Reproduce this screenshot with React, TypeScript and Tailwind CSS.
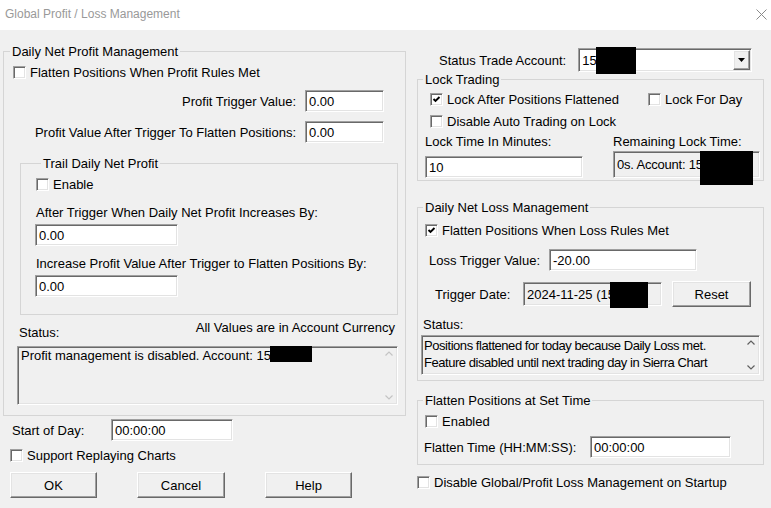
import React from 'react';

// classic 3D borders
const sunken =
  'border border-t-[#a0a0a0] border-l-[#a0a0a0] border-r-white border-b-white shadow-[inset_1px_1px_0_#696969,inset_-1px_-1px_0_#e3e3e3]';
const raised =
  'border border-t-white border-l-white border-r-[#696969] border-b-[#696969] shadow-[inset_-1px_-1px_0_#a0a0a0,inset_1px_1px_0_#e3e3e3]';

const Check = ({ checked = false }: { checked?: boolean }) => (
  <span className={`relative inline-block w-[13px] h-[13px] shrink-0 bg-white ${sunken}`}>
    {checked && (
      <svg className="absolute left-[1px] top-[1px]" width="9" height="9" viewBox="0 0 9 9">
        <path d="M1.5 4 L3.5 6 L7.5 2" fill="none" stroke="#000" strokeWidth="1.9" />
      </svg>
    )}
  </span>
);

const CheckRow = ({
  label,
  checked,
  className = '',
}: {
  label: string;
  checked?: boolean;
  className?: string;
}) => (
  <div className={`flex items-center h-[15px] gap-[4px] ${className}`}>
    <Check checked={checked} />
    <span className="whitespace-nowrap">{label}</span>
  </div>
);

const Edit = ({
  value,
  className = '',
  readOnly = false,
  children,
}: {
  value?: string;
  className?: string;
  readOnly?: boolean;
  children?: React.ReactNode;
}) => (
  <div
    className={`relative flex items-center pl-[3px] shrink-0 whitespace-nowrap ${readOnly ? 'bg-[#f0f0f0]' : 'bg-white'} ${sunken} ${className}`}
  >
    {value}
    {children}
  </div>
);

const Btn = ({ label, className = '' }: { label: string; className?: string }) => (
  <button className={`h-[26px] bg-[#f0f0f0] flex items-center justify-center ${raised} ${className}`}>
    {label}
  </button>
);

const Group = ({
  title,
  className = '',
  legendClass = 'ml-[6px]',
  children,
}: {
  title: string;
  className?: string;
  legendClass?: string;
  children: React.ReactNode;
}) => (
  <fieldset className={`border border-[#d5d5d5] min-w-0 ${className}`}>
    <legend className={`px-[2px] leading-[15px] ${legendClass}`}>{title}</legend>
    {children}
  </fieldset>
);

const Scroll = ({ dim }: { dim?: boolean }) => (
  <div className="w-[17px] flex flex-col justify-between items-center py-[4px] self-stretch">
    <svg width="8" height="5" viewBox="0 0 8 5">
      <path d="M0.5 4.5 L4 1 L7.5 4.5" fill="none" stroke={dim ? '#c4c4c4' : '#606060'} strokeWidth="1.2" />
    </svg>
    <svg width="8" height="5" viewBox="0 0 8 5">
      <path d="M0.5 0.5 L4 4 L7.5 0.5" fill="none" stroke={dim ? '#c4c4c4' : '#606060'} strokeWidth="1.2" />
    </svg>
  </div>
);

const Redact = ({ className }: { className: string }) => (
  <span className={`absolute bg-black ${className}`} />
);

export default function App() {
  return (
    <div className="w-[771px] h-[508px] overflow-hidden bg-[#f0f0f0] text-black text-[13px] leading-[15px] font-['Liberation_Sans',Arial,sans-serif]">
      {/* title bar */}
      <div className="h-[30px] bg-white flex items-center justify-between pl-[5px] pr-[4px] pb-[2px]">
        <span className="text-[12px] text-[#999999]">Global Profit / Loss Management</span>
        <svg width="11" height="11" viewBox="0 0 11 11">
          <path d="M0.5 0.5 L10.5 10.5 M10.5 0.5 L0.5 10.5" stroke="#8a8a8a" strokeWidth="1" />
        </svg>
      </div>

      <div className="flex pl-[3px]">
        {/* left column */}
        <div className="w-[403px] flex flex-col">
          <Group title="Daily Net Profit Management" className="mt-[14px] pb-[10px]">
            <CheckRow label="Flatten Positions When Profit Rules Met" className="mt-[6px] pl-[9px]" />
            <div className="flex items-center justify-end pr-[21px] mt-[10px]">
              <span>Profit Trigger Value:</span>
              <Edit value="0.00" className="ml-[9px] w-[79px] h-[22px]" />
            </div>
            <div className="flex items-center justify-end pr-[21px] mt-[9px]">
              <span>Profit Value After Trigger To Flatten Positions:</span>
              <Edit value="0.00" className="ml-[9px] w-[79px] h-[22px]" />
            </div>

            <Group title="Trail Daily Net Profit" className="mt-[13px] ml-[16px] mr-[7px] pb-[17px] pl-[14px]">
              <CheckRow label="Enable" className="mt-[6px] pl-[1px]" />
              <div className="mt-[13px] pl-[1px]">After Trigger When Daily Net Profit Increases By:</div>
              <Edit value="0.00" className="mt-[4px] w-[143px] h-[22px]" />
              <div className="mt-[10px] pl-[1px]">Increase Profit Value After Trigger to Flatten Positions By:</div>
              <Edit value="0.00" className="mt-[4px] w-[143px] h-[22px]" />
            </Group>

            <div className="flex justify-between h-[20px] mt-[5px] pl-[15px] pr-[10px]">
              <span className="self-end">Status:</span>
              <span className="self-start">All Values are in Account Currency</span>
            </div>
            <div className={`relative flex mt-[6px] ml-[13px] mr-[7px] h-[59px] bg-[#f0f0f0] ${sunken}`}>
              <div className="flex-1 pl-[3px] pt-[1px]">Profit management is disabled. Account: 15</div>
              <Scroll dim />
              <Redact className="left-[252px] -top-[1px] w-[42px] h-[16px]" />
            </div>
          </Group>

          <div className="flex items-center mt-[3px] pl-[9px]">
            <span className="w-[99px]">Start of Day:</span>
            <Edit value="00:00:00" className="w-[122px] h-[22px]" />
          </div>
          <CheckRow label="Support Replaying Charts" className="mt-[7px] pl-[7px]" />
          <div className="flex gap-[40px] mt-[9px] pl-[7px]">
            <Btn label="OK" className="w-[87px]" />
            <Btn label="Cancel" className="w-[88px]" />
            <Btn label="Help" className="w-[87px]" />
          </div>
        </div>

        {/* right column */}
        <div className="w-[347px] ml-[11px] flex flex-col">
          <div className="flex items-center mt-[18px] pl-[22px]">
            <span>Status Trade Account:</span>
            <div className={`relative ml-[12px] w-[174px] h-[24px] bg-white flex items-center justify-between ${sunken}`}>
              <span className="pl-[3px]">15</span>
              <div className={`mr-[1px] w-[17px] h-[20px] bg-[#f0f0f0] flex items-center justify-center ${raised}`}>
                <svg width="7" height="4" viewBox="0 0 7 4">
                  <path d="M0 0 H7 L3.5 4 Z" fill="#000" />
                </svg>
              </div>
              <Redact className="left-[17px] -top-[2px] w-[40px] h-[27px]" />
            </div>
          </div>

          <Group title="Lock Trading" className="pb-[2px]" legendClass="ml-[5px]">
            <div className="flex items-center mt-[5px] pl-[12px]">
              <CheckRow label="Lock After Positions Flattened" checked className="w-[218px]" />
              <CheckRow label="Lock For Day" />
            </div>
            <CheckRow label="Disable Auto Trading on Lock" className="mt-[7px] pl-[12px]" />
            <div className="flex mt-[5px] pl-[7px]">
              <span className="w-[188px]">Lock Time In Minutes:</span>
              <span>Remaining Lock Time:</span>
            </div>
            <div className="flex items-end mt-[2px] pl-[7px]">
              <Edit value="10" className="w-[158px] h-[22px]" />
              <Edit readOnly className="ml-[30px] w-[147px] h-[27px]">
                <span className="pb-[1px] tracking-[-0.2px]">0s. Account: 15</span>
                <Redact className="left-[86px] -top-[1px] w-[53px] h-[34px]" />
              </Edit>
            </div>
          </Group>

          <Group title="Daily Net Loss Management" className="mt-[19px] pb-[5px]" legendClass="ml-[5px]">
            <CheckRow label="Flatten Positions When Loss Rules Met" checked className="mt-[8px] pl-[7px]" />
            <div className="flex items-center mt-[11px] pl-[11px]">
              <span className="w-[120px]">Loss Trigger Value:</span>
              <Edit value="-20.00" className="w-[148px] h-[22px]" />
            </div>
            <div className="flex items-center mt-[10px] pl-[17px]">
              <span className="w-[88px]">Trigger Date:</span>
              <Edit readOnly className="w-[139px] h-[24px]">
                2024-11-25 (15
                <Redact className="left-[86px] -top-[1px] w-[38px] h-[26px]" />
              </Edit>
              <Btn label="Reset" className="ml-[10px] w-[79px]" />
            </div>
            <div className="mt-[10px] pl-[5px]">Status:</div>
            <div className={`flex mt-[3px] ml-[3px] mr-[3px] h-[40px] bg-[#f0f0f0] ${sunken}`}>
              <div className="flex-1 pl-[2px] pt-[1px] leading-[17px] whitespace-nowrap tracking-[-0.45px]">
                <div>Positions flattened for today because Daily Loss met.</div>
                <div>Feature disabled until next trading day in Sierra Chart</div>
              </div>
              <Scroll />
            </div>
          </Group>

          <Group title="Flatten Positions at Set Time" className="mt-[12px] pb-[6px]" legendClass="ml-[5px]">
            <CheckRow label="Enabled" className="mt-[6px] pl-[7px]" />
            <div className="flex items-center mt-[7px] pl-[6px]">
              <span className="w-[166px]">Flatten Time (HH:MM:SS):</span>
              <Edit value="00:00:00" className="w-[141px] h-[22px]" />
            </div>
          </Group>

          <CheckRow label="Disable Global/Profit Loss Management on Startup" className="mt-[10px] pl-[0px]" />
        </div>
      </div>
    </div>
  );
}
